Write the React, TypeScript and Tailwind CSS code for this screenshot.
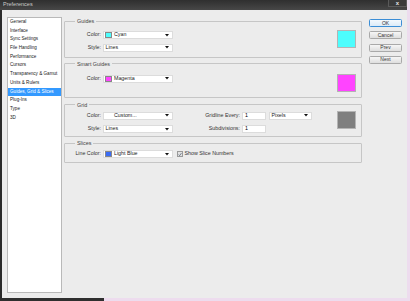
import React from 'react';

const font = { fontFamily: '"Liberation Sans", Arial, sans-serif' };

const navItems = [
  'General',
  'Interface',
  'Sync Settings',
  'File Handling',
  'Performance',
  'Cursors',
  'Transparency & Gamut',
  'Units & Rulers',
  'Guides, Grid & Slices',
  'Plug-Ins',
  'Type',
  '3D',
];

const Arrow = () => (
  <svg width="4" height="3" viewBox="0 0 4 3" className="shrink-0">
    <polygon points="0,0 4,0 2,2.5" fill="#111" />
  </svg>
);

interface SelectProps {
  value: string;
  swatch?: string;
  indent?: boolean;
  width?: string;
}

const Select: React.FC<SelectProps> = ({ value, swatch, indent, width = 'w-[70px]' }) => (
  <div className={`${width} h-[8px] bg-white border border-[#dcdcdc] flex items-center pl-[1px] pr-[3px]`}>
    {swatch ? (
      <span className="w-[7px] h-[6px] mr-[1.5px] border border-[#888]" style={{ backgroundColor: swatch }} />
    ) : indent ? (
      <span className="w-[8.5px]" />
    ) : null}
    <span className="flex-1 leading-none text-[#222] pl-[0.5px] whitespace-nowrap">{value}</span>
    <Arrow />
  </div>
);

const Label: React.FC<{ text: string; className?: string }> = ({ text, className = 'w-[38px]' }) => (
  <span className={`${className} text-right pr-[2px] leading-none text-[#333] whitespace-nowrap`}>{text}</span>
);

const Swatch: React.FC<{ color: string; className?: string }> = ({ color, className = '' }) => (
  <div className={`w-[19px] h-[18px] border border-[#b4b4b4] ${className}`} style={{ backgroundColor: color }} />
);

const Group: React.FC<{ title: string; className?: string; children: React.ReactNode }> = ({ title, className = '', children }) => (
  <fieldset className={`border border-[#c6c6c6] rounded-[1px] ${className}`}>
    <legend className="ml-[10px] px-[2px] text-[5.4px] leading-[6px] text-[#444]">{title}</legend>
    {children}
  </fieldset>
);

const Button: React.FC<{ text: string; primary?: boolean }> = ({ text, primary }) => (
  <button
    className={`w-[33px] h-[8px] rounded-[1.5px] border text-[5px] leading-none text-[#333] flex items-center justify-center ${
      primary
        ? 'border-[#3c8ed6] bg-gradient-to-b from-[#f4f9fd] to-[#dcebf8]'
        : 'border-[#a9a9a9] bg-gradient-to-b from-[#f6f6f6] to-[#dedede]'
    }`}
  >
    {text}
  </button>
);

export default function App() {
  return (
    <div
      className="w-[410px] h-[301px] flex flex-col overflow-hidden bg-[#eddcee] text-[5.3px]"
      style={font}
    >
      <div className="w-[407px] h-[298px] flex flex-col shrink-0">
        {/* title bar */}
        <div className="h-[10px] flex items-start bg-gradient-to-b from-[#2f2f2f] to-[#474747]">
          <span className="pl-[3px] pt-[2px] text-[5.5px] leading-none text-[#c9c9c9]">Preferences</span>
          <div className="ml-auto w-[19px] h-[7px] bg-[#3a3a3a] border border-[#5a5a5a] border-t-0 flex items-center justify-center text-[6px] leading-none text-[#e4e4e4] font-bold">
            x
          </div>
        </div>

        {/* body */}
        <div className="flex-1 flex bg-[#ececec] border-l-2 border-[#2b2b2b]">
          <div className="ml-[5px] mt-[7px] mb-[5px] w-[55px] bg-white border border-[#b9b9b9] flex flex-col text-[4.6px]">
            {navItems.map((item) => (
              <div
                key={item}
                className={`h-[8.7px] flex items-center pl-[2px] leading-none whitespace-nowrap ${
                  item === 'Guides, Grid & Slices' ? 'bg-[#3399ff] text-white' : 'text-[#222]'
                }`}
              >
                {item}
              </div>
            ))}
          </div>

          <div className="ml-[2px] mt-[8px] w-[298px] flex flex-col">
            <Group title="Guides">
              <div className="flex items-start">
                <div className="flex flex-col gap-[4.5px] mt-[7px] mb-[5px]">
                  <div className="flex items-center">
                    <Label text="Color:" />
                    <Select value="Cyan" swatch="#4dfdfd" />
                  </div>
                  <div className="flex items-center">
                    <Label text="Style:" />
                    <Select value="Lines" />
                  </div>
                </div>
                <Swatch color="#4dfdfd" className="ml-auto mr-[5px] mt-[6px]" />
              </div>
            </Group>

            <Group title="Smart Guides" className="mt-[3px]">
              <div className="flex items-start">
                <div className="flex items-center mt-[8px]">
                  <Label text="Color:" />
                  <Select value="Magenta" swatch="#ff44ff" />
                </div>
                <Swatch color="#ff44ff" className="ml-auto mr-[5px] mt-[7px] mb-[5px]" />
              </div>
            </Group>

            <Group title="Grid" className="mt-[4px]">
              <div className="flex items-start">
                <div className="flex flex-col gap-[5.5px] mt-[4px] mb-[3px]">
                  <div className="flex items-center">
                    <Label text="Color:" />
                    <Select value="Custom..." indent />
                    <Label text="Gridline Every:" className="w-[69px]" />
                    <div className="w-[24px] h-[8px] bg-white border border-[#dcdcdc] flex items-center pl-[2px] leading-none">1</div>
                    <div className="ml-[3px]">
                      <Select value="Pixels" width="w-[43px]" />
                    </div>
                  </div>
                  <div className="flex items-center">
                    <Label text="Style:" />
                    <Select value="Lines" />
                    <Label text="Subdivisions:" className="w-[69px]" />
                    <div className="w-[24px] h-[8px] bg-white border border-[#dcdcdc] flex items-center pl-[2px] leading-none">1</div>
                  </div>
                </div>
                <Swatch color="#7f7f7f" className="ml-auto mr-[5px] mt-[3px]" />
              </div>
            </Group>

            <Group title="Slices" className="mt-[3px]">
              <div className="flex items-center mt-[4px] mb-[4px]">
                <Label text="Line Color:" />
                <Select value="Light Blue" swatch="#3b6cf5" />
                <div className="ml-[4px] w-[6px] h-[6px] border border-[#9a9a9a] bg-[#e2e2e2] flex items-center justify-center">
                  <svg width="5" height="5" viewBox="0 0 5 5">
                    <polyline points="0.8,2.6 2,3.9 4.3,0.8" fill="none" stroke="#4a5a70" strokeWidth="0.9" />
                  </svg>
                </div>
                <span className="ml-[1.5px] leading-none text-[#333]">Show Slice Numbers</span>
              </div>
            </Group>
          </div>

          <div className="ml-[7px] mt-[9px] flex flex-col gap-[4.3px]">
            <Button text="OK" primary />
            <Button text="Cancel" />
            <Button text="Prev" />
            <Button text="Next" />
          </div>
        </div>
      </div>
      <div className="flex-1 flex">
        <div className="w-[104px] bg-[#2f2f2f]" />
      </div>
    </div>
  );
}
